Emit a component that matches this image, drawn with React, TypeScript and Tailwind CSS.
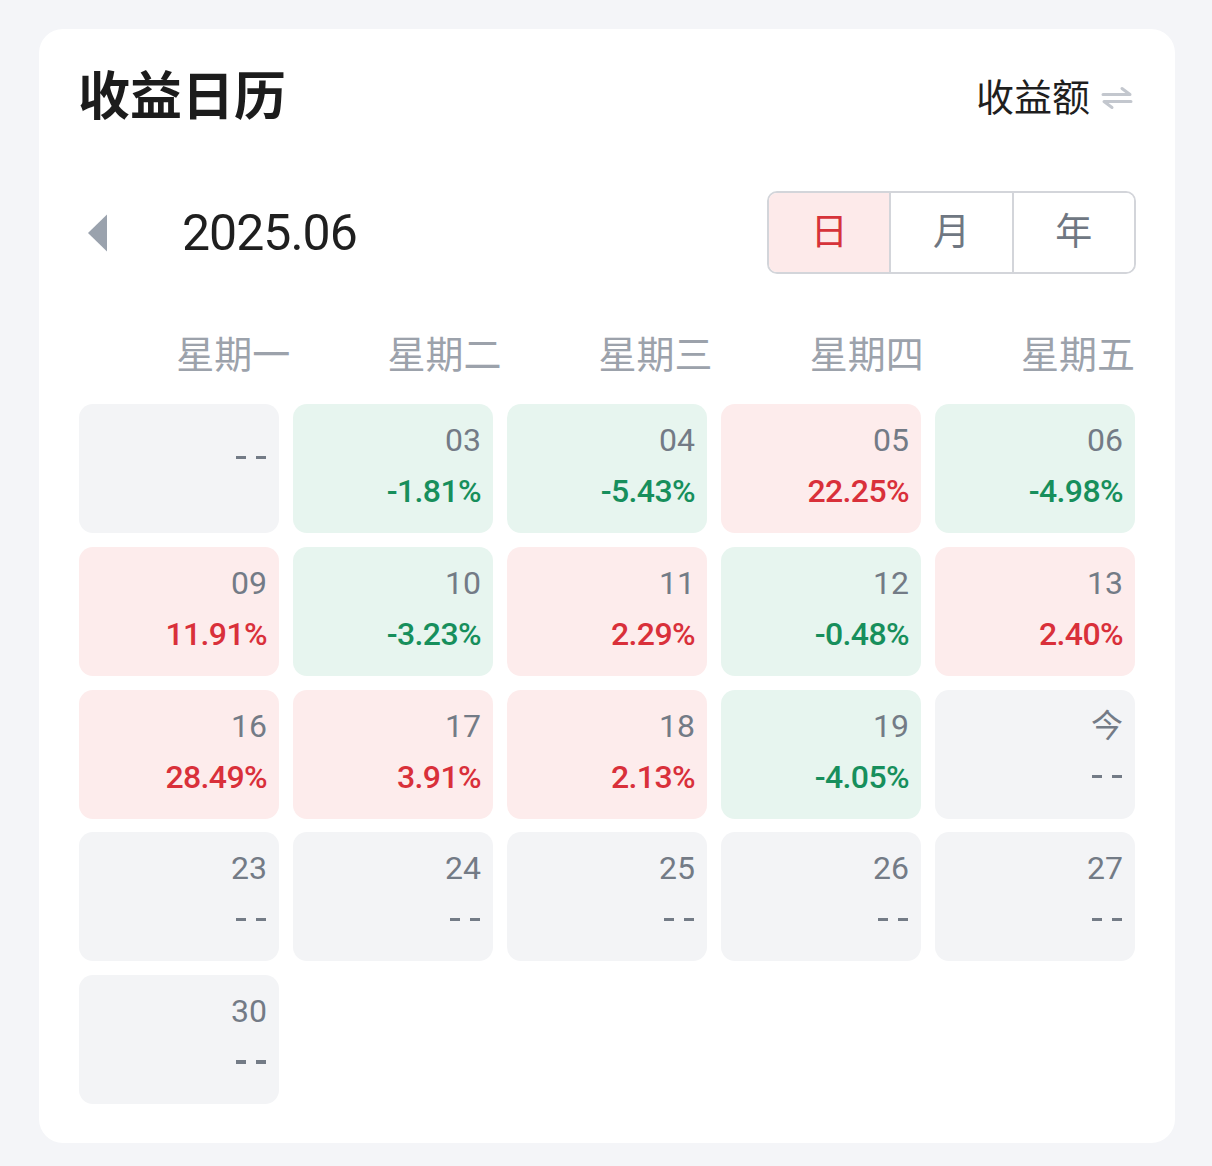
import { useState } from "react";

type Day = { date?: string; pct?: string; up?: boolean };

// rows of the june calendar, weekdays only
const days: Day[] = [
  {},
  { date: "03", pct: "-1.81%", up: false },
  { date: "04", pct: "-5.43%", up: false },
  { date: "05", pct: "22.25%", up: true },
  { date: "06", pct: "-4.98%", up: false },
  { date: "09", pct: "11.91%", up: true },
  { date: "10", pct: "-3.23%", up: false },
  { date: "11", pct: "2.29%", up: true },
  { date: "12", pct: "-0.48%", up: false },
  { date: "13", pct: "2.40%", up: true },
  { date: "16", pct: "28.49%", up: true },
  { date: "17", pct: "3.91%", up: true },
  { date: "18", pct: "2.13%", up: true },
  { date: "19", pct: "-4.05%", up: false },
  { date: "今" },
  { date: "23" },
  { date: "24" },
  { date: "25" },
  { date: "26" },
  { date: "27" },
  { date: "30" },
];

const weekdays = ["星期一", "星期二", "星期三", "星期四", "星期五"];
const tabs = ["日", "月", "年"];

function SwapIcon() {
  return (
    <svg width="32" height="26" viewBox="0 0 32 26" fill="none" className="ml-[11px]">
      <path d="M2 9.5H29L21 3.5" stroke="#c3c7ce" strokeWidth="3" strokeLinecap="round" strokeLinejoin="round" />
      <path d="M30 16.5H3L11 22.5" stroke="#c3c7ce" strokeWidth="3" strokeLinecap="round" strokeLinejoin="round" />
    </svg>
  );
}

function Dashes() {
  return (
    <span className="flex h-[40px] items-center gap-[10px]">
      <span className="h-[3.5px] w-[10px] bg-[#737b86]" />
      <span className="h-[3.5px] w-[10px] bg-[#737b86]" />
    </span>
  );
}

function DayCell({ day }: { day: Day }) {
  const bg =
    day.up === true ? "bg-[#fdecec]" : day.up === false ? "bg-[#e7f5ef]" : "bg-[#f3f4f6]";

  if (!day.date) {
    return (
      <div className={`h-[129px] rounded-[14px] ${bg} flex items-center justify-end pr-[13px] pb-[22px]`}>
        <Dashes />
      </div>
    );
  }

  return (
    <div className={`h-[129px] rounded-[14px] ${bg} flex flex-col items-end pt-[16px] pr-[12px]`}>
      <span className="text-[32px] leading-[40px] text-[#737b86]">{day.date}</span>
      {day.pct ? (
        <span
          className={`mt-[11px] text-[32px] leading-[40px] font-medium tracking-[-0.6px] ${
            day.up ? "text-[#d9303a]" : "text-[#178f5c]"
          }`}
        >
          {day.pct}
        </span>
      ) : (
        <span className="mt-[11px] pr-[1px]">
          <Dashes />
        </span>
      )}
    </div>
  );
}

export default function App() {
  const [tab, setTab] = useState(0);

  return (
    <div
      className="min-h-[1166px] w-[1212px] bg-[#f4f5f8] pl-[39px] pr-[37px] pt-[29px]"
      style={{ fontFamily: "Roboto, 'Noto Sans CJK SC', sans-serif" }}
    >
      <div className="rounded-[24px] bg-white px-[40px] pt-[29px] pb-[39px]">
        {/* header */}
        <div className="flex h-[80px] items-center justify-between">
          <h1 className="text-[52px] font-bold leading-none text-[#1c1c1c] -ml-[1px]">收益日历</h1>
          <div className="flex items-center pr-[2px]">
            <span className="text-[38px] leading-none text-[#1f1f1f]">收益额</span>
            <SwapIcon />
          </div>
        </div>

        {/* month switch + tabs */}
        <div className="mt-[53px] flex h-[83px] items-center justify-between">
          <div className="flex items-center">
            <svg width="22" height="40" viewBox="0 0 22 40" className="ml-[8px]">
              <path d="M20 1.5V38.5L1 20Z" fill="#9aa2ad" />
            </svg>
            <span className="ml-[73px] text-[50px] leading-none text-[#1f1f1f] tracking-[-1px]">2025.06</span>
          </div>
          <div className="-mr-[1px] flex h-[83px] w-[369px] overflow-hidden rounded-[10px] border-2 border-[#d3d5da]">
            {tabs.map((t, i) => (
              <button
                key={t}
                onClick={() => setTab(i)}
                className={`flex flex-1 items-center justify-center text-[37px] leading-none ${
                  i > 0 ? "border-l-2 border-[#d3d5da]" : ""
                } ${tab === i ? "bg-[#fdeaea] text-[#d6333a]" : "bg-white text-[#6f7782]"}`}
              >
                {t}
              </button>
            ))}
          </div>
        </div>

        {/* weekday labels */}
        <div className="mt-[56px] grid h-[50px] grid-cols-5 items-center">
          {weekdays.map((w) => (
            <span key={w} className="text-right text-[38px] leading-none text-[#9ca2ab]">
              {w}
            </span>
          ))}
        </div>

        {/* days */}
        <div className="mt-[24px] grid grid-cols-5 gap-x-[14px] gap-y-[13.75px]">
          {days.map((d, i) => (
            <DayCell key={i} day={d} />
          ))}
        </div>
      </div>
    </div>
  );
}
